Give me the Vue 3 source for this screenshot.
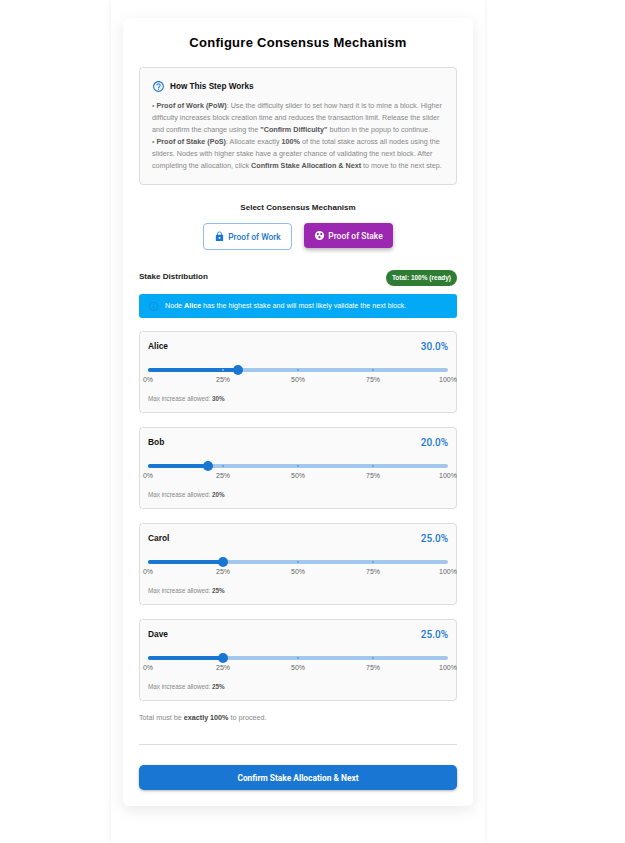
<script setup>
const nodes = [
  { name: 'Alice', stake: 30 },
  { name: 'Bob', stake: 20 },
  { name: 'Carol', stake: 25 },
  { name: 'Dave', stake: 25 }
]
const marks = [0, 25, 50, 75, 100]
</script>

<template>
  <div class="page">
    <div class="column">
      <div class="card">
        <h1 class="title">Configure Consensus Mechanism</h1>

        <div class="info-box">
          <div class="info-head">
            <svg class="help-icon" viewBox="0 0 24 24" fill="#1976d2">
              <path d="M11 18h2v-2h-2v2zm1-16C6.48 2 2 6.48 2 12s4.48 10 10 10 10-4.48 10-10S17.52 2 12 2zm0 18c-4.41 0-8-3.59-8-8s3.59-8 8-8 8 3.59 8 8-3.59 8-8 8zm0-14c-2.21 0-4 1.79-4 4h2c0-1.1.9-2 2-2s2 .9 2 2c0 2-3 1.75-3 5h2c0-2.25 3-2.5 3-5 0-2.21-1.79-4-4-4z" />
            </svg>
            <span>How This Step Works</span>
          </div>
          <p class="info-text">
            • <b>Proof of Work (PoW)</b>: Use the difficulty slider to set how hard it is to mine a block. Higher difficulty increases block creation time and reduces the transaction limit. Release the slider and confirm the change using the <b>"Confirm Difficulty"</b> button in the popup to continue.<br />
            • <b>Proof of Stake (PoS)</b>: Allocate exactly <b>100%</b> of the total stake across all nodes using the sliders. Nodes with higher stake have a greater chance of validating the next block. After completing the allocation, click <b>Confirm Stake Allocation &amp; Next</b> to move to the next step.
          </p>
        </div>

        <div class="select-label">Select Consensus Mechanism</div>
        <div class="mech-buttons">
          <button class="mech outline">
            <svg class="mech-icon" viewBox="0 0 24 24" fill="#1976d2">
              <path d="M18 8h-1V6c0-2.76-2.24-5-5-5S7 3.24 7 6v2H6c-1.1 0-2 .9-2 2v10c0 1.1.9 2 2 2h12c1.1 0 2-.9 2-2V10c0-1.1-.9-2-2-2zm-6 9c-1.1 0-2-.9-2-2s.9-2 2-2 2 .9 2 2-.9 2-2 2zm3.1-9H8.9V6c0-1.71 1.39-3.1 3.1-3.1 1.71 0 3.1 1.39 3.1 3.1v2z" />
            </svg>
            Proof of Work
          </button>
          <button class="mech filled">
            <svg class="mech-icon" viewBox="0 0 24 24" fill="#fff">
              <path fill-rule="evenodd" d="M12 2a10 10 0 1 0 0 20 10 10 0 0 0 0-20zM8.200 11.200a2.400 2.400 0 1 1 0-4.800 2.400 2.400 0 0 1 0 4.800zm7.600 0a2.400 2.400 0 1 1 0-4.800 2.400 2.400 0 0 1 0 4.800zM12 18a2.400 2.400 0 1 1 0-4.800 2.400 2.400 0 0 1 0 4.800z" />
            </svg>
            Proof of Stake
          </button>
        </div>

        <div class="dist-head">
          <span class="dist-title">Stake Distribution</span>
          <span class="total-chip">Total: 100% (ready)</span>
        </div>

        <div class="alert">
          <svg class="alert-icon" viewBox="0 0 24 24" fill="#1a8fe3">
            <path d="M11 7h2v2h-2zm0 4h2v6h-2zm1-9C6.48 2 2 6.48 2 12s4.48 10 10 10 10-4.48 10-10S17.52 2 12 2zm0 18c-4.41 0-8-3.59-8-8s3.59-8 8-8 8 3.59 8 8-3.59 8-8 8z" />
          </svg>
          <span>Node <b>Alice</b> has the highest stake and will most likely validate the next block.</span>
        </div>

        <div class="nodes">
          <div v-for="node in nodes" :key="node.name" class="node">
            <div class="node-head">
              <span class="node-name">{{ node.name }}</span>
              <span class="node-value">{{ node.stake.toFixed(1) }}%</span>
            </div>
            <div class="slider">
              <div class="rail"></div>
              <div class="fill" :style="{ width: node.stake + '%' }"></div>
              <i v-for="m in marks.slice(1, 4)" :key="m" class="tick" :style="{ left: m + '%' }"></i>
              <div class="thumb" :style="{ left: node.stake + '%' }"></div>
            </div>
            <div class="marks">
              <span v-for="m in marks" :key="m" class="mark" :style="{ left: m + '%' }">{{ m }}%</span>
            </div>
            <div class="max-note">Max increase allowed: <b>{{ node.stake }}%</b></div>
          </div>
        </div>

        <p class="total-note">Total must be <b>exactly 100%</b> to proceed.</p>
        <hr class="divider" />
        <button class="confirm">Confirm Stake Allocation &amp; Next</button>
      </div>
    </div>
  </div>
</template>

<style>
html, body {
  margin: 0;
  background: #fff;
}
</style>

<style scoped>
.page {
  height: 843px;
  overflow: hidden;
  padding-left: 111px;
  font-family: "Liberation Sans", Roboto, sans-serif;
  background: #fff;
}

.column {
  width: 374px;
  height: 843px;
  padding: 18px 12px 0;
  box-sizing: border-box;
  box-shadow: 0 0 6px rgba(0, 0, 0, 0.07);
}

.card {
  background: #fff;
  border-radius: 6px;
  padding: 16px;
  height: 788px;
  box-sizing: border-box;
  box-shadow: 0 4px 16px rgba(0, 0, 0, 0.09);
}

.title {
  margin: 0 0 15px;
  font: bold 13px/18px "Liberation Sans", sans-serif;
  text-align: center;
  color: #000;
  letter-spacing: 0.27px;
}

.info-box {
  height: 118px;
  box-sizing: border-box;
  border: 1px solid #ddd;
  border-radius: 4px;
  background: #fafafa;
  padding: 11px 12px 0;
}

.info-head {
  display: flex;
  align-items: center;
  gap: 5px;
  font-size: 8.2px;
  font-weight: 700;
  color: #111;
  height: 14px;
}

.help-icon {
  width: 13px;
  height: 13px;
}

.info-text {
  margin: 7px 0 0;
  font-size: 7.2px;
  line-height: 12px;
  color: #888;
}

.info-text b {
  color: #555;
}

.select-label {
  margin-top: 18px;
  text-align: center;
  font-size: 8.05px;
  font-weight: 700;
  color: #222;
  line-height: 10px;
}

.mech-buttons {
  display: flex;
  justify-content: center;
  gap: 12px;
  margin-top: 10px;
}

.mech {
  display: inline-flex;
  align-items: center;
  justify-content: center;
  gap: 3px;
  height: 27px;
  border-radius: 4px;
  font: 500 8.5px Roboto, sans-serif;
  padding: 0;
  white-space: nowrap;
}

.outline {
  width: 89px;
  background: #fff;
  border: 1px solid #90bce8;
  color: #1976d2;
}

.filled {
  width: 89px;
  height: 25px;
  background: #9c27b0;
  border: 0;
  color: #fff;
  box-shadow: 0 2px 4px rgba(0, 0, 0, 0.3);
}

.mech-icon {
  width: 11px;
  height: 11px;
  flex: none;
}

.dist-head {
  display: flex;
  justify-content: space-between;
  align-items: center;
  margin-top: 20px;
  height: 16px;
}

.dist-title {
  font-size: 8.05px;
  font-weight: 700;
  color: #222;
  margin-top: -3px;
}

.total-chip {
  background: #2e7d32;
  color: #fff;
  font-size: 6.5px;
  font-weight: 700;
  height: 16px;
  line-height: 16px;
  border-radius: 8px;
  padding: 0 6px;
}

.alert {
  display: flex;
  align-items: center;
  gap: 6px;
  height: 24px;
  margin-top: 8px;
  padding: 0 9px;
  border-radius: 3px;
  background: #03a9f4;
  color: #fff;
  font-size: 7.15px;
}

.alert-icon {
  width: 11px;
  height: 11px;
  flex: none;
}

.nodes {
  display: flex;
  flex-direction: column;
  gap: 14px;
  margin-top: 13px;
}

.node {
  height: 82px;
  box-sizing: border-box;
  border: 1px solid #ddd;
  border-radius: 4px;
  background: #fafafa;
  padding: 8px 8px 0;
}

.node-head {
  display: flex;
  justify-content: space-between;
  align-items: center;
  height: 12px;
}

.node-name {
  font-size: 8.4px;
  font-weight: 700;
  color: #111;
}

.node-value {
  font: 500 10px Roboto, sans-serif;
  color: #1976d2;
  margin-top: 1px;
}

.slider {
  position: relative;
  height: 4px;
  margin-top: 16px;
}

.rail {
  position: absolute;
  inset: 0;
  border-radius: 2px;
  background: #a3c8ed;
}

.fill {
  position: absolute;
  left: 0;
  top: 0;
  bottom: 0;
  border-radius: 2px;
  background: #1976d2;
}

.tick {
  position: absolute;
  top: 1px;
  width: 2px;
  height: 2px;
  margin-left: -1px;
  background: #6fa8e0;
}

.thumb {
  position: absolute;
  top: -3px;
  width: 10px;
  height: 10px;
  margin-left: -5px;
  border-radius: 50%;
  background: #1976d2;
}

.marks {
  position: relative;
  height: 10px;
  margin-top: 3px;
}

.mark {
  position: absolute;
  transform: translateX(-50%);
  font-size: 7px;
  line-height: 10px;
  color: #666;
}

.max-note {
  margin-top: 10px;
  font-size: 6.3px;
  line-height: 8px;
  color: #888;
}

.max-note b {
  color: #555;
}

.total-note {
  margin: 12px 0 0;
  font-size: 7.2px;
  line-height: 10px;
  color: #888;
}

.total-note b {
  color: #444;
}

.divider {
  margin: 21px 0 0;
  border: 0;
  border-top: 1px solid #ddd;
}

.confirm {
  display: block;
  width: 100%;
  height: 25px;
  margin-top: 20px;
  border: 0;
  border-radius: 5px;
  background: #1976d2;
  color: #fff;
  font: 700 8.4px Roboto, sans-serif;
  box-shadow: 0 1px 3px rgba(0, 0, 0, 0.3);
}
</style>
